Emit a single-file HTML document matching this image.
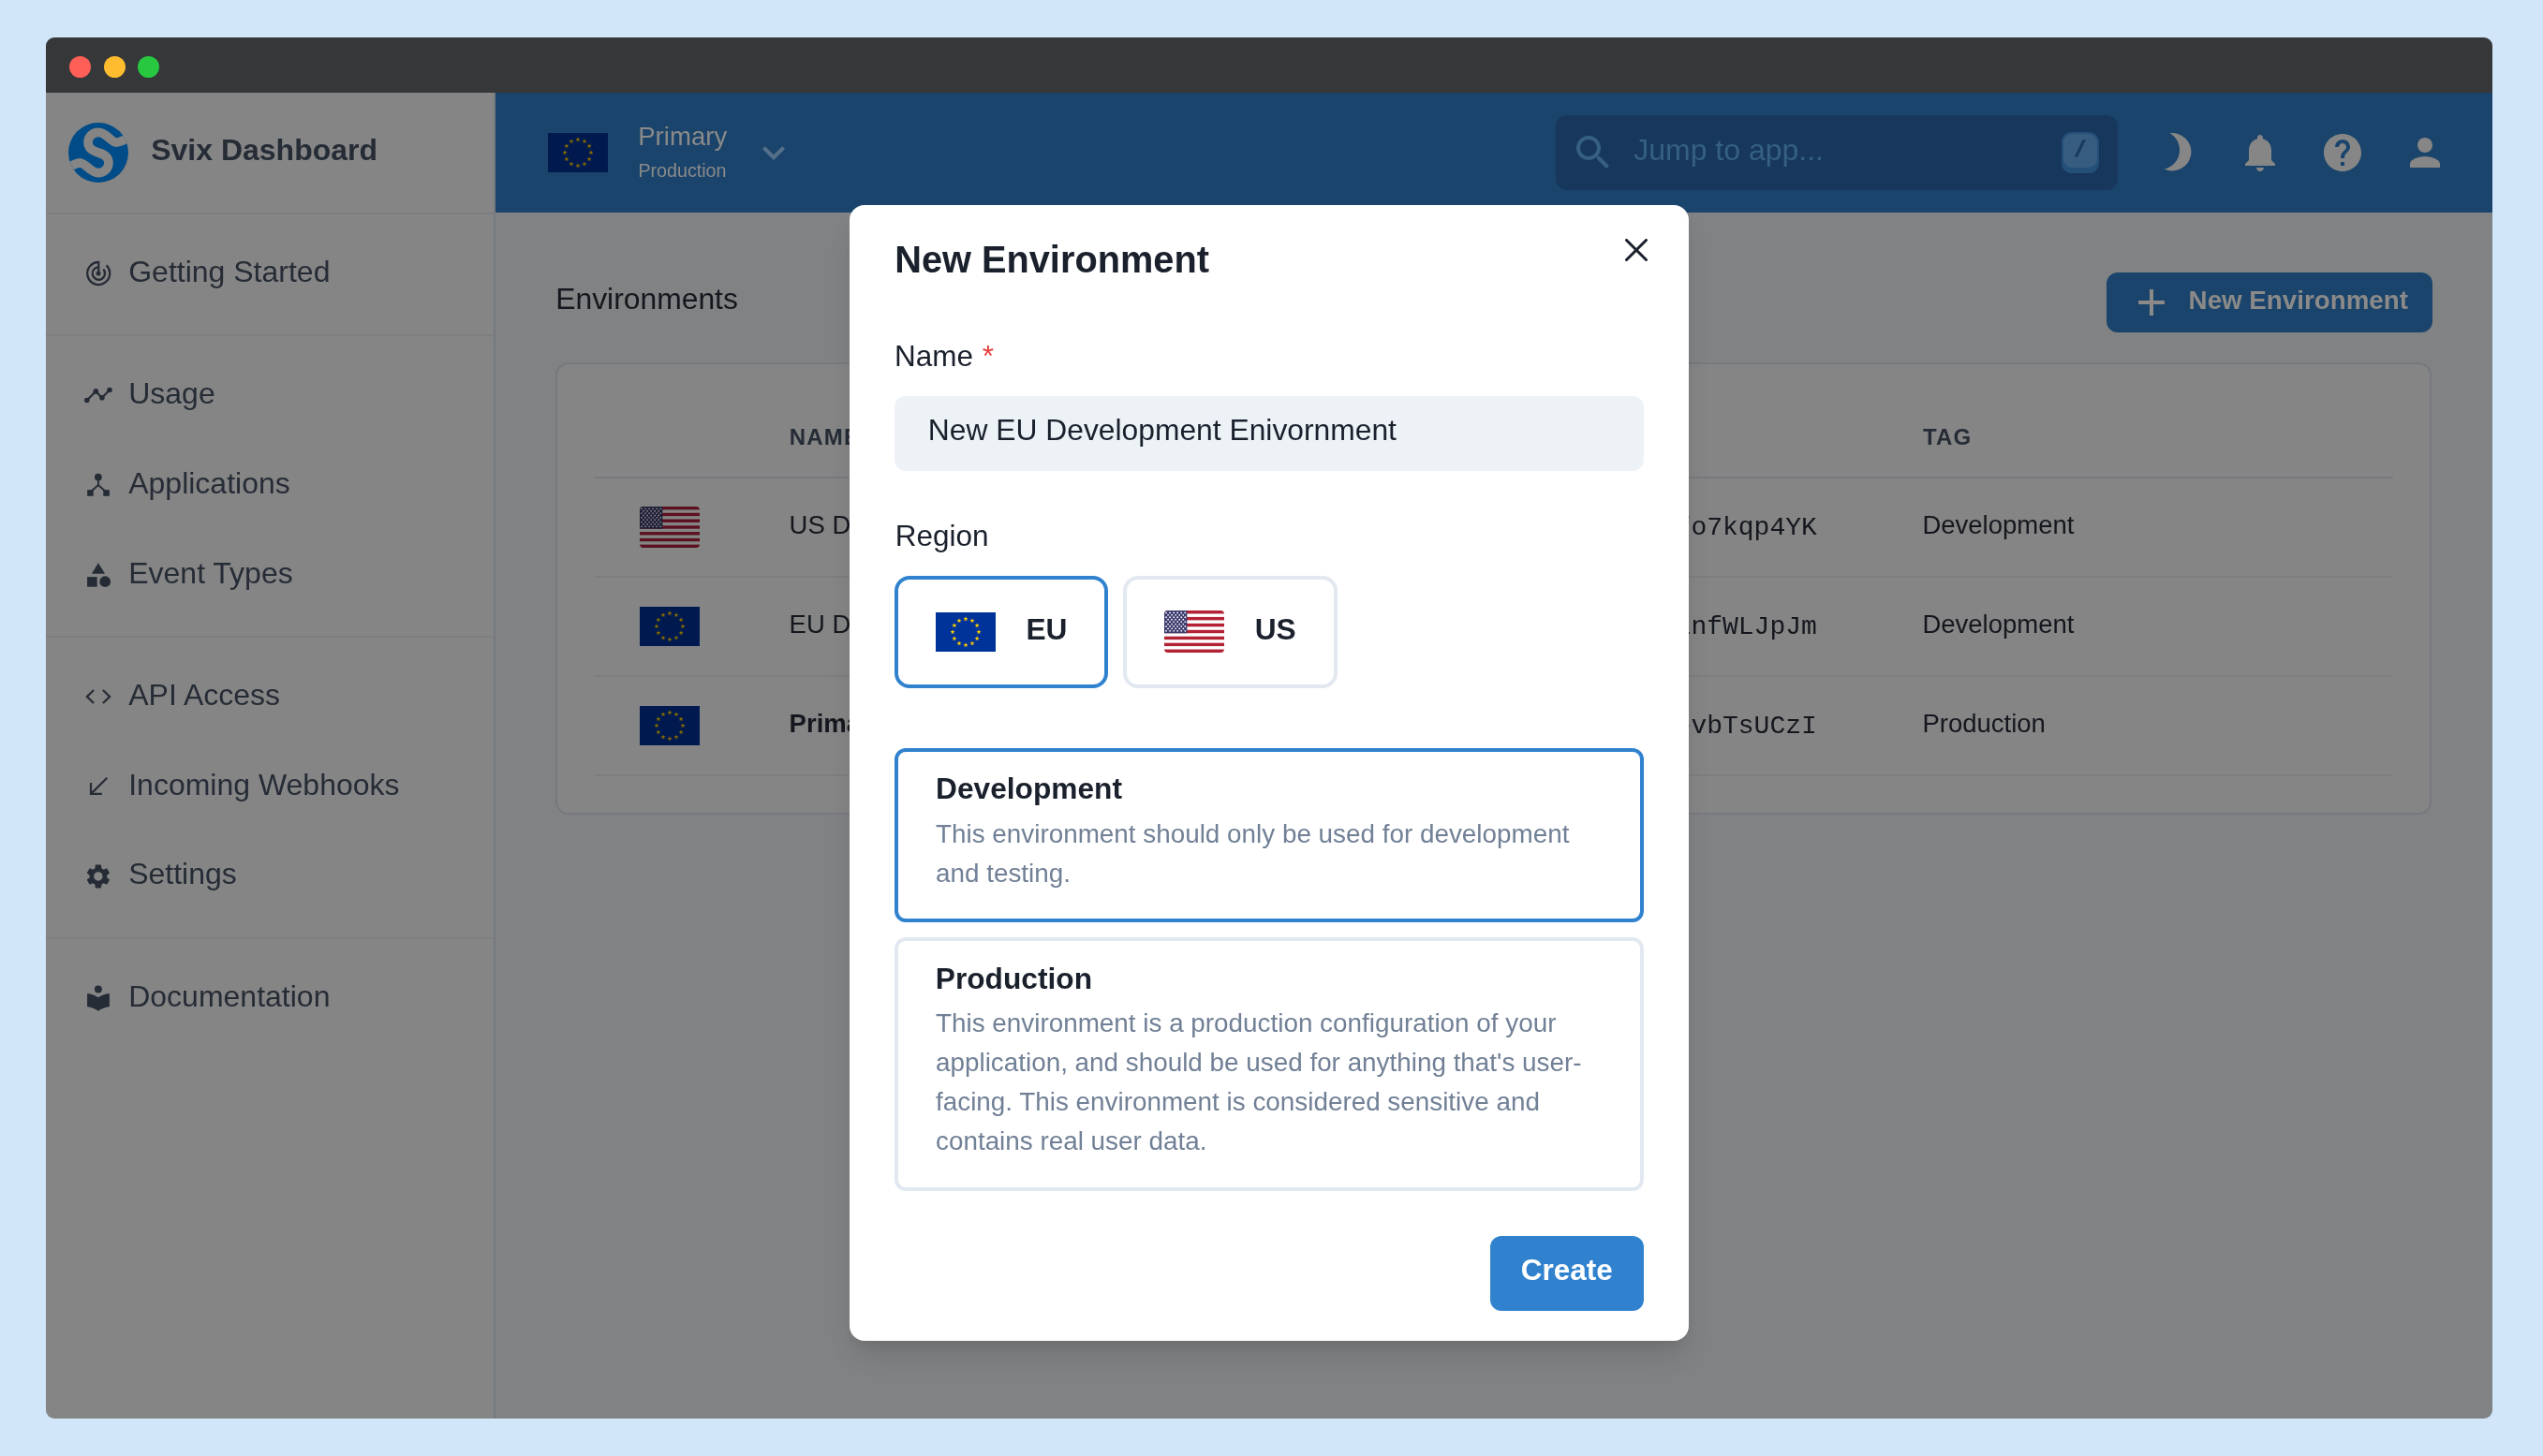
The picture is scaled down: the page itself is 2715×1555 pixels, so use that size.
<!DOCTYPE html>
<html><head><meta charset="utf-8"><title>Svix Dashboard</title>
<style>
html,body{margin:0;padding:0}
body{width:2715px;height:1555px;background:#d1e6f9;position:relative;overflow:hidden;font-family:"Liberation Sans",sans-serif}
.a{position:absolute}
.t{position:absolute;white-space:nowrap}
svg{display:block}
</style></head><body>
<div id="root" style="position:absolute;left:0;top:0;width:2715px;height:1555px;will-change:transform">
<div class="a" style="left:49px;top:40px;width:2612px;height:59px;background:#363739;border-radius:9px 9px 0 0"></div>
<div class="a" style="left:74.0px;top:59.6px;width:23px;height:23px;border-radius:50%;background:#ff5f57"></div>
<div class="a" style="left:110.8px;top:59.6px;width:23px;height:23px;border-radius:50%;background:#febc2e"></div>
<div class="a" style="left:147.3px;top:59.6px;width:23px;height:23px;border-radius:50%;background:#28c840"></div>
<div class="a" style="left:49px;top:99px;width:479px;height:1416px;background:#858585;border-radius:0 0 0 9px"></div>
<div class="a" style="left:49px;top:227px;width:478px;height:2px;background:#76797d;opacity:.55"></div>
<div class="a" style="left:49px;top:357px;width:478px;height:2px;background:#76797d;opacity:.55"></div>
<div class="a" style="left:49px;top:679px;width:478px;height:2px;background:#76797d;opacity:.55"></div>
<div class="a" style="left:49px;top:1001px;width:478px;height:2px;background:#76797d;opacity:.55"></div>
<svg class="a" style="left:73px;top:131px" width="64" height="64" viewBox="0 0 64 64"><defs><clipPath id="lc"><circle cx="32" cy="32" r="32"/></clipPath></defs><circle cx="32" cy="32" r="32" fill="#004c88"/><g clip-path="url(#lc)"><path d="M 74 11 C 66 14, 58 21.1, 51.3 21.1 C 45 20.4, 40.5 10.4, 32 10.4 C 26 10.4, 21 15.2, 21 21.1 C 21 26.7, 25.5 30.2, 32 32 C 38.5 33.8, 43 37.3, 43 42.9 C 43 48.8, 38 53.6, 32 53.6 C 23.5 53.6, 19 43.6, 12.7 42.9 C 6 42.9, -2 50, -10 53" fill="none" stroke="#858585" stroke-width="9.6"/></g></svg>
<div class="t" style="left:161.2px;top:143.61px;font-size:32px;line-height:32px;color:#262c36;font-weight:700;">Svix Dashboard</div>
<div class="t" style="left:137.2px;top:273.81px;font-size:32px;line-height:32px;color:#262c36;">Getting Started</div>
<div class="t" style="left:137.2px;top:403.91px;font-size:32px;line-height:32px;color:#262c36;">Usage</div>
<div class="t" style="left:137.2px;top:500.11px;font-size:32px;line-height:32px;color:#262c36;">Applications</div>
<div class="t" style="left:137.2px;top:596.01px;font-size:32px;line-height:32px;color:#262c36;">Event Types</div>
<div class="t" style="left:137.2px;top:725.91px;font-size:32px;line-height:32px;color:#262c36;">API Access</div>
<div class="t" style="left:137.2px;top:821.71px;font-size:32px;line-height:32px;color:#262c36;">Incoming Webhooks</div>
<div class="t" style="left:137.2px;top:916.91px;font-size:32px;line-height:32px;color:#262c36;">Settings</div>
<div class="t" style="left:137.2px;top:1047.61px;font-size:32px;line-height:32px;color:#262c36;">Documentation</div>
<svg class="a" style="left:85px;top:270px" width="40" height="40" viewBox="0 0 40 40"><path d="M20.3 10 A12 12 0 1 0 28.6 13.4" fill="none" stroke="#262c36" stroke-width="2.3"/><path d="M20.3 15.3 A6.7 6.7 0 1 0 25.3 17.5" fill="none" stroke="#262c36" stroke-width="2.3"/><rect x="19.2" y="9" width="2.2" height="13" fill="#262c36"/><circle cx="20" cy="22" r="2.5" fill="#262c36"/></svg>
<svg class="a" style="left:85px;top:400px" width="40" height="40" viewBox="0 0 40 40"><polyline points="7.8,27.5 17.3,17.9 23.9,24.7 32,16.5" fill="none" stroke="#262c36" stroke-width="2.2"/><circle cx="7.8" cy="27.5" r="2.8" fill="#262c36"/><circle cx="17.3" cy="17.9" r="2.8" fill="#262c36"/><circle cx="23.9" cy="24.7" r="2.8" fill="#262c36"/><circle cx="32" cy="16.5" r="2.8" fill="#262c36"/></svg>
<svg class="a" style="left:85px;top:495px" width="40" height="40" viewBox="0 0 40 40"><circle cx="19.9" cy="14.6" r="3.9" fill="#262c36"/><rect x="19" y="14.6" width="1.9" height="9" fill="#262c36"/><polyline points="12,30 19.9,23 27.8,30" fill="none" stroke="#262c36" stroke-width="2"/><rect x="8.2" y="28.2" width="6.5" height="6.6" fill="#262c36"/><rect x="25.3" y="28.2" width="6.6" height="6.6" fill="#262c36"/></svg>
<svg class="a" style="left:85px;top:590px" width="40" height="40" viewBox="0 0 40 40"><polygon points="19.9,11.3 12.9,22.8 27.1,22.8" fill="#262c36"/><rect x="8.1" y="26.1" width="10.6" height="10.6" fill="#262c36"/><circle cx="27.2" cy="31.2" r="5.9" fill="#262c36"/></svg>
<svg class="a" style="left:85px;top:722px" width="40" height="40" viewBox="0 0 40 40"><polyline points="15.1,15 7.9,22 15.1,29" fill="none" stroke="#262c36" stroke-width="2.3"/><polyline points="24.9,15 32.1,22 24.9,29" fill="none" stroke="#262c36" stroke-width="2.3"/></svg>
<svg class="a" style="left:85px;top:818px" width="40" height="40" viewBox="0 0 40 40"><line x1="29.3" y1="12.8" x2="12.6" y2="29.4" stroke="#262c36" stroke-width="2.2"/><polyline points="12,18.1 12,29.8 23.8,29.8" fill="none" stroke="#262c36" stroke-width="2.2"/></svg>
<svg class="a" style="left:85px;top:914px" width="40" height="40" viewBox="0 0 40 40"><g transform="translate(19.9 22) scale(1.29) translate(-12 -12)"><path d="M19.14 12.94c.04-.3.06-.61.06-.94 0-.32-.02-.64-.07-.94l2.03-1.58c.18-.14.23-.41.12-.61l-1.92-3.32c-.12-.22-.37-.29-.59-.22l-2.39.96c-.5-.38-1.03-.7-1.62-.94l-.36-2.54c-.04-.24-.24-.41-.48-.41h-3.84c-.24 0-.43.17-.47.41l-.36 2.54c-.59.24-1.13.57-1.62.94l-2.39-.96c-.22-.08-.47 0-.59.22L2.74 8.870c-.12.21-.08.47.12.61l2.03 1.580c-.05.3-.09.63-.09.94s.02.64.07.94l-2.03 1.58c-.18.14-.23.41-.12.61l1.92 3.32c.12.22.37.29.59.22l2.39-.96c.5.38 1.03.7 1.62.94l.36 2.54c.05.24.24.41.48.41h3.84c.24 0 .44-.17.47-.41l.36-2.54c.59-.24 1.13-.56 1.62-.94l2.39.96c.22.08.47 0 .59-.22l1.92-3.32c.12-.22.07-.47-.12-.61l-2.01-1.58zM12 15.6c-1.98 0-3.6-1.62-3.6-3.6s1.62-3.6 3.6-3.6 3.6 1.62 3.6 3.6-1.62 3.6-3.6 3.6z" fill="#262c36"/></g></svg>
<svg class="a" style="left:85px;top:1044px" width="40" height="40" viewBox="0 0 40 40"><circle cx="19.9" cy="12.6" r="4" fill="#262c36"/><path d="M8.1 16.9 Q15 17.5 19.9 21.2 Q24.8 17.5 31.9 16.9 V30.9 Q25 31.8 19.9 35.7 Q14.8 31.8 8.1 30.9 Z" fill="#262c36"/></svg>
<div class="a" style="left:529px;top:99px;width:2132px;height:1416px;background:#808283;border-radius:0 0 9px 0"></div>
<div class="a" style="left:529px;top:99px;width:2132px;height:128px;background:#1a446b;"></div>
<div class="a" style="left:527px;top:99px;width:2px;height:1416px;background:#76797d;"></div>
<svg class="a" style="left:585px;top:142px" width="64" height="42" viewBox="0 0 64 42"><rect width="64" height="42" fill="#001a50" rx="0"/><polygon points="32.00,4.37 32.65,6.11 34.52,6.20 33.06,7.36 33.56,9.15 32.00,8.13 30.44,9.15 30.94,7.36 29.48,6.20 31.35,6.11" fill="#856a00"/><polygon points="38.99,6.24 39.65,7.99 41.51,8.07 40.05,9.23 40.55,11.03 38.99,10.00 37.44,11.03 37.94,9.23 36.48,8.07 38.34,7.99" fill="#856a00"/><polygon points="44.11,11.36 44.77,13.11 46.63,13.19 45.17,14.35 45.67,16.15 44.11,15.12 42.56,16.15 43.06,14.35 41.60,13.19 43.46,13.11" fill="#856a00"/><polygon points="45.99,18.35 46.64,20.10 48.50,20.18 47.04,21.34 47.54,23.14 45.99,22.11 44.43,23.14 44.93,21.34 43.47,20.18 45.33,20.10" fill="#856a00"/><polygon points="44.11,25.35 44.77,27.09 46.63,27.18 45.17,28.34 45.67,30.13 44.11,29.10 42.56,30.13 43.06,28.34 41.60,27.18 43.46,27.09" fill="#856a00"/><polygon points="38.99,30.47 39.65,32.21 41.51,32.29 40.05,33.46 40.55,35.25 38.99,34.22 37.44,35.25 37.94,33.46 36.48,32.29 38.34,32.21" fill="#856a00"/><polygon points="32.00,32.34 32.65,34.09 34.52,34.17 33.06,35.33 33.56,37.13 32.00,36.10 30.44,37.13 30.94,35.33 29.48,34.17 31.35,34.09" fill="#856a00"/><polygon points="25.01,30.47 25.66,32.21 27.52,32.29 26.06,33.46 26.56,35.25 25.01,34.22 23.45,35.25 23.95,33.46 22.49,32.29 24.35,32.21" fill="#856a00"/><polygon points="19.89,25.35 20.54,27.09 22.40,27.18 20.94,28.34 21.44,30.13 19.89,29.10 18.33,30.13 18.83,28.34 17.37,27.18 19.23,27.09" fill="#856a00"/><polygon points="18.01,18.35 18.67,20.10 20.53,20.18 19.07,21.34 19.57,23.14 18.01,22.11 16.46,23.14 16.96,21.34 15.50,20.18 17.36,20.10" fill="#856a00"/><polygon points="19.89,11.36 20.54,13.11 22.40,13.19 20.94,14.35 21.44,16.15 19.89,15.12 18.33,16.15 18.83,14.35 17.37,13.19 19.23,13.11" fill="#856a00"/><polygon points="25.01,6.24 25.66,7.99 27.52,8.07 26.06,9.23 26.56,11.03 25.01,10.00 23.45,11.03 23.95,9.23 22.49,8.07 24.35,7.99" fill="#856a00"/></svg>
<div class="t" style="left:681.2px;top:131.83px;font-size:27.6px;line-height:27.6px;color:#8a8a8a;">Primary</div>
<div class="t" style="left:681.4px;top:172.92px;font-size:19.7px;line-height:19.7px;color:#8a8a8a;">Production</div>
<svg class="a" style="left:802px;top:139px" width="48" height="48" viewBox="0 0 24 24"><path d="M16.59 8.59L12 13.17 7.41 8.59 6 10l6 6 6-6z" fill="#56708a"/></svg>
<div class="a" style="left:1661px;top:123px;width:600px;height:80px;background:#17385c;border-radius:12px"></div>
<svg class="a" style="left:1677px;top:139px" width="48" height="48" viewBox="0 0 24 24"><path d="M15.5 14h-.79l-.28-.27C15.41 12.59 16 11.11 16 9.5 16 5.91 13.09 3 9.5 3S3 5.91 3 9.5 5.91 16 9.5 16c1.61 0 3.090-.59 4.23-1.57l.27.28v.79l5 4.99L20.49 19l-4.99-5zm-6 0C7.010 14 5 11.99 5 9.5S7.01 5 9.5 5 14 7.01 14 9.5 11.99 14 9.5 14z" fill="#35607f"/></svg>
<div class="t" style="left:1744.2px;top:143.91px;font-size:32px;line-height:32px;color:#35607f;">Jump to app...</div>
<div class="a" style="left:2201px;top:141px;width:40px;height:44px;background:#234f78;border-radius:11px"></div>
<div class="a" style="left:2203px;top:143px;width:36px;height:36px;background:#365d80;border-radius:9px"></div>
<svg class="a" style="left:2210px;top:145px" width="20" height="26" viewBox="0 0 20 26"><polygon points="4.5,22.8 8,22.8 17,4.2 13.5,4.2" fill="#183a5f"/></svg>
<svg class="a" style="left:2290px;top:135px" width="60" height="55" viewBox="2290 135 60 55"><path d="M2316.6 142.2 A20.2 20.2 0 1 1 2310.6 180.5 A20.76 20.76 0 0 0 2316.6 142.2 Z" fill="#868686"/></svg>
<svg class="a" style="left:2389px;top:139px" width="48" height="48" viewBox="0 0 24 24"><path d="M12 22c1.1 0 2-.9 2-2h-4c0 1.1.89 2 2 2zm6-6v-5c0-3.07-1.64-5.64-4.5-6.32V4c0-.83-.67-1.5-1.5-1.5s-1.5.67-1.5 1.5v.68C7.63 5.36 6 7.92 6 11v5l-2 2v1h16v-1l-2-2z" fill="#868686"/></svg>
<svg class="a" style="left:2477px;top:139px" width="48" height="48" viewBox="0 0 24 24"><path d="M12 2C6.48 2 2 6.48 2 12s4.48 10 10 10 10-4.48 10-10S17.52 2 12 2zm1 17h-2v-2h2v2zm2.07-7.75l-.9.92C13.45 12.9 13 13.5 13 15h-2v-.5c0-1.1.45-2.1 1.17-2.83l1.24-1.26c.37-.36.59-.86.59-1.41 0-1.1-.9-2-2-2s-2 .9-2 2H8c0-2.21 1.790-4 4-4s4 1.79 4 4c0 .88-.36 1.68-.93 2.25z" fill="#868686"/></svg>
<svg class="a" style="left:2565px;top:139px" width="48" height="48" viewBox="0 0 24 24"><path d="M12 12c2.21 0 4-1.79 4-4s-1.79-4-4-4-4 1.79-4 4 1.79 4 4 4zm0 2c-2.67 0-8 1.34-8 4v2h16v-2c0-2.66-5.33-4-8-4z" fill="#868686"/></svg>
<div class="t" style="left:593.2px;top:304.13px;font-size:31.85px;line-height:31.85px;color:#14171d;">Environments</div>
<div class="a" style="left:2249px;top:291px;width:348px;height:64px;background:#1a446b;border-radius:12px"></div>
<div class="a" style="left:2295px;top:309px;width:4px;height:28px;background:#8b8a89;"></div>
<div class="a" style="left:2283px;top:321px;width:28px;height:4px;background:#8b8a89;"></div>
<div class="t" style="left:2336.6px;top:306.80px;font-size:27.75px;line-height:27.75px;color:#8b8a89;font-weight:700;">New Environment</div>
<div class="a" style="left:593px;top:387px;width:2003px;height:483px;border:2px solid #76797d;border-radius:14px;background:#858585;box-sizing:border-box"></div>
<div class="t" style="left:842.8px;top:454.68px;font-size:24px;line-height:24px;color:#262c36;font-weight:700;letter-spacing:1.2px;">NAME</div>
<div class="t" style="left:2053.0px;top:454.68px;font-size:24px;line-height:24px;color:#262c36;font-weight:700;letter-spacing:1.2px;">TAG</div>
<div class="a" style="left:635px;top:509px;width:1920px;height:2px;background:#76797d;"></div>
<div class="a" style="left:635px;top:615px;width:1920px;height:2px;background:#7b7e81;"></div>
<div class="a" style="left:635px;top:721px;width:1920px;height:2px;background:#7b7e81;"></div>
<div class="a" style="left:635px;top:827px;width:1920px;height:2px;background:#7b7e81;"></div>
<svg class="a" style="left:683px;top:541px" width="64" height="44" viewBox="0 0 64 44"><defs><clipPath id="c683_541"><rect width="64" height="44" rx="4"/></clipPath></defs><g clip-path="url(#c683_541)"><rect width="64" height="44" fill="#858585"/><rect y="0.00" width="64" height="3.38" fill="#5c1120"/><rect y="6.77" width="64" height="3.38" fill="#5c1120"/><rect y="13.54" width="64" height="3.38" fill="#5c1120"/><rect y="20.31" width="64" height="3.38" fill="#5c1120"/><rect y="27.08" width="64" height="3.38" fill="#5c1120"/><rect y="33.85" width="64" height="3.38" fill="#5c1120"/><rect y="40.62" width="64" height="3.38" fill="#5c1120"/><rect width="24.32" height="23.69" fill="#1f1f39"/><circle cx="2.03" cy="2.37" r="0.9" fill="#858585"/><circle cx="6.08" cy="2.37" r="0.9" fill="#858585"/><circle cx="10.13" cy="2.37" r="0.9" fill="#858585"/><circle cx="14.19" cy="2.37" r="0.9" fill="#858585"/><circle cx="18.24" cy="2.37" r="0.9" fill="#858585"/><circle cx="22.29" cy="2.37" r="0.9" fill="#858585"/><circle cx="4.05" cy="4.74" r="0.9" fill="#858585"/><circle cx="8.11" cy="4.74" r="0.9" fill="#858585"/><circle cx="12.16" cy="4.74" r="0.9" fill="#858585"/><circle cx="16.21" cy="4.74" r="0.9" fill="#858585"/><circle cx="20.27" cy="4.74" r="0.9" fill="#858585"/><circle cx="2.03" cy="7.11" r="0.9" fill="#858585"/><circle cx="6.08" cy="7.11" r="0.9" fill="#858585"/><circle cx="10.13" cy="7.11" r="0.9" fill="#858585"/><circle cx="14.19" cy="7.11" r="0.9" fill="#858585"/><circle cx="18.24" cy="7.11" r="0.9" fill="#858585"/><circle cx="22.29" cy="7.11" r="0.9" fill="#858585"/><circle cx="4.05" cy="9.48" r="0.9" fill="#858585"/><circle cx="8.11" cy="9.48" r="0.9" fill="#858585"/><circle cx="12.16" cy="9.48" r="0.9" fill="#858585"/><circle cx="16.21" cy="9.48" r="0.9" fill="#858585"/><circle cx="20.27" cy="9.48" r="0.9" fill="#858585"/><circle cx="2.03" cy="11.85" r="0.9" fill="#858585"/><circle cx="6.08" cy="11.85" r="0.9" fill="#858585"/><circle cx="10.13" cy="11.85" r="0.9" fill="#858585"/><circle cx="14.19" cy="11.85" r="0.9" fill="#858585"/><circle cx="18.24" cy="11.85" r="0.9" fill="#858585"/><circle cx="22.29" cy="11.85" r="0.9" fill="#858585"/><circle cx="4.05" cy="14.22" r="0.9" fill="#858585"/><circle cx="8.11" cy="14.22" r="0.9" fill="#858585"/><circle cx="12.16" cy="14.22" r="0.9" fill="#858585"/><circle cx="16.21" cy="14.22" r="0.9" fill="#858585"/><circle cx="20.27" cy="14.22" r="0.9" fill="#858585"/><circle cx="2.03" cy="16.58" r="0.9" fill="#858585"/><circle cx="6.08" cy="16.58" r="0.9" fill="#858585"/><circle cx="10.13" cy="16.58" r="0.9" fill="#858585"/><circle cx="14.19" cy="16.58" r="0.9" fill="#858585"/><circle cx="18.24" cy="16.58" r="0.9" fill="#858585"/><circle cx="22.29" cy="16.58" r="0.9" fill="#858585"/><circle cx="4.05" cy="18.95" r="0.9" fill="#858585"/><circle cx="8.11" cy="18.95" r="0.9" fill="#858585"/><circle cx="12.16" cy="18.95" r="0.9" fill="#858585"/><circle cx="16.21" cy="18.95" r="0.9" fill="#858585"/><circle cx="20.27" cy="18.95" r="0.9" fill="#858585"/><circle cx="2.03" cy="21.32" r="0.9" fill="#858585"/><circle cx="6.08" cy="21.32" r="0.9" fill="#858585"/><circle cx="10.13" cy="21.32" r="0.9" fill="#858585"/><circle cx="14.19" cy="21.32" r="0.9" fill="#858585"/><circle cx="18.24" cy="21.32" r="0.9" fill="#858585"/><circle cx="22.29" cy="21.32" r="0.9" fill="#858585"/></g></svg>
<svg class="a" style="left:683px;top:648px" width="64" height="42" viewBox="0 0 64 42"><rect width="64" height="42" fill="#001a50" rx="0"/><polygon points="32.00,4.37 32.65,6.11 34.52,6.20 33.06,7.36 33.56,9.15 32.00,8.13 30.44,9.15 30.94,7.36 29.48,6.20 31.35,6.11" fill="#856a00"/><polygon points="38.99,6.24 39.65,7.99 41.51,8.07 40.05,9.23 40.55,11.03 38.99,10.00 37.44,11.03 37.94,9.23 36.48,8.07 38.34,7.99" fill="#856a00"/><polygon points="44.11,11.36 44.77,13.11 46.63,13.19 45.17,14.35 45.67,16.15 44.11,15.12 42.56,16.15 43.06,14.35 41.60,13.19 43.46,13.11" fill="#856a00"/><polygon points="45.99,18.35 46.64,20.10 48.50,20.18 47.04,21.34 47.54,23.14 45.99,22.11 44.43,23.14 44.93,21.34 43.47,20.18 45.33,20.10" fill="#856a00"/><polygon points="44.11,25.35 44.77,27.09 46.63,27.18 45.17,28.34 45.67,30.13 44.11,29.10 42.56,30.13 43.06,28.34 41.60,27.18 43.46,27.09" fill="#856a00"/><polygon points="38.99,30.47 39.65,32.21 41.51,32.29 40.05,33.46 40.55,35.25 38.99,34.22 37.44,35.25 37.94,33.46 36.48,32.29 38.34,32.21" fill="#856a00"/><polygon points="32.00,32.34 32.65,34.09 34.52,34.17 33.06,35.33 33.56,37.13 32.00,36.10 30.44,37.13 30.94,35.33 29.48,34.17 31.35,34.09" fill="#856a00"/><polygon points="25.01,30.47 25.66,32.21 27.52,32.29 26.06,33.46 26.56,35.25 25.01,34.22 23.45,35.25 23.95,33.46 22.49,32.29 24.35,32.21" fill="#856a00"/><polygon points="19.89,25.35 20.54,27.09 22.40,27.18 20.94,28.34 21.44,30.13 19.89,29.10 18.33,30.13 18.83,28.34 17.37,27.18 19.23,27.09" fill="#856a00"/><polygon points="18.01,18.35 18.67,20.10 20.53,20.18 19.07,21.34 19.57,23.14 18.01,22.11 16.46,23.14 16.96,21.34 15.50,20.18 17.36,20.10" fill="#856a00"/><polygon points="19.89,11.36 20.54,13.11 22.40,13.19 20.94,14.35 21.44,16.15 19.89,15.12 18.33,16.15 18.83,14.35 17.37,13.19 19.23,13.11" fill="#856a00"/><polygon points="25.01,6.24 25.66,7.99 27.52,8.07 26.06,9.23 26.56,11.03 25.01,10.00 23.45,11.03 23.95,9.23 22.49,8.07 24.35,7.99" fill="#856a00"/></svg>
<svg class="a" style="left:683px;top:754px" width="64" height="42" viewBox="0 0 64 42"><rect width="64" height="42" fill="#001a50" rx="0"/><polygon points="32.00,4.37 32.65,6.11 34.52,6.20 33.06,7.36 33.56,9.15 32.00,8.13 30.44,9.15 30.94,7.36 29.48,6.20 31.35,6.11" fill="#856a00"/><polygon points="38.99,6.24 39.65,7.99 41.51,8.07 40.05,9.23 40.55,11.03 38.99,10.00 37.44,11.03 37.94,9.23 36.48,8.07 38.34,7.99" fill="#856a00"/><polygon points="44.11,11.36 44.77,13.11 46.63,13.19 45.17,14.35 45.67,16.15 44.11,15.12 42.56,16.15 43.06,14.35 41.60,13.19 43.46,13.11" fill="#856a00"/><polygon points="45.99,18.35 46.64,20.10 48.50,20.18 47.04,21.34 47.54,23.14 45.99,22.11 44.43,23.14 44.93,21.34 43.47,20.18 45.33,20.10" fill="#856a00"/><polygon points="44.11,25.35 44.77,27.09 46.63,27.18 45.17,28.34 45.67,30.13 44.11,29.10 42.56,30.13 43.06,28.34 41.60,27.18 43.46,27.09" fill="#856a00"/><polygon points="38.99,30.47 39.65,32.21 41.51,32.29 40.05,33.46 40.55,35.25 38.99,34.22 37.44,35.25 37.94,33.46 36.48,32.29 38.34,32.21" fill="#856a00"/><polygon points="32.00,32.34 32.65,34.09 34.52,34.17 33.06,35.33 33.56,37.13 32.00,36.10 30.44,37.13 30.94,35.33 29.48,34.17 31.35,34.09" fill="#856a00"/><polygon points="25.01,30.47 25.66,32.21 27.52,32.29 26.06,33.46 26.56,35.25 25.01,34.22 23.45,35.25 23.95,33.46 22.49,32.29 24.35,32.21" fill="#856a00"/><polygon points="19.89,25.35 20.54,27.09 22.40,27.18 20.94,28.34 21.44,30.13 19.89,29.10 18.33,30.13 18.83,28.34 17.37,27.18 19.23,27.09" fill="#856a00"/><polygon points="18.01,18.35 18.67,20.10 20.53,20.18 19.07,21.34 19.57,23.14 18.01,22.11 16.46,23.14 16.96,21.34 15.50,20.18 17.36,20.10" fill="#856a00"/><polygon points="19.89,11.36 20.54,13.11 22.40,13.19 20.94,14.35 21.44,16.15 19.89,15.12 18.33,16.15 18.83,14.35 17.37,13.19 19.23,13.11" fill="#856a00"/><polygon points="25.01,6.24 25.66,7.99 27.52,8.07 26.06,9.23 26.56,11.03 25.01,10.00 23.45,11.03 23.95,9.23 22.49,8.07 24.35,7.99" fill="#856a00"/></svg>
<div class="t" style="left:842.6px;top:546.72px;font-size:27.5px;line-height:27.5px;color:#14171d;">US Development</div>
<div class="t" style="right:775.2px;top:549.55px;font-size:28px;line-height:28px;color:#14171d;font-family:'Liberation Mono',monospace;">qfo7kqp4YK</div>
<div class="t" style="left:2052.4px;top:546.72px;font-size:27.5px;line-height:27.5px;color:#14171d;">Development</div>
<div class="t" style="left:842.6px;top:652.72px;font-size:27.5px;line-height:27.5px;color:#14171d;">EU Development</div>
<div class="t" style="right:775.2px;top:655.55px;font-size:28px;line-height:28px;color:#14171d;font-family:'Liberation Mono',monospace;">xinfWLJpJm</div>
<div class="t" style="left:2052.4px;top:652.72px;font-size:27.5px;line-height:27.5px;color:#14171d;">Development</div>
<div class="t" style="left:842.6px;top:758.72px;font-size:27.5px;line-height:27.5px;color:#14171d;font-weight:700;">Primary</div>
<div class="t" style="right:775.2px;top:761.55px;font-size:28px;line-height:28px;color:#14171d;font-family:'Liberation Mono',monospace;">zevbTsUCzI</div>
<div class="t" style="left:2052.4px;top:758.72px;font-size:27.5px;line-height:27.5px;color:#14171d;">Production</div>
<div class="a" style="left:907px;top:219px;width:896px;height:1213px;background:#ffffff;border-radius:16px;box-shadow:0 20px 30px -6px rgba(0,0,0,.12),0 8px 12px -4px rgba(0,0,0,.06)"></div>
<div class="t" style="left:955.2px;top:257.84px;font-size:39.75px;line-height:39.75px;color:#1a202c;font-weight:700;">New Environment</div>
<svg class="a" style="left:1735px;top:255px" width="24" height="24" viewBox="0 0 24 24"><path d="M.439,21.44a1.5,1.5,0,0,0,2.122,2.121L11.823,14.3a.25.25,0,0,1,.354,0l9.262,9.263a1.5,1.5,0,1,0,2.122-2.121L14.3,12.177a.25.25,0,0,1,0-.354l9.263-9.262A1.5,1.5,0,0,0,21.439.44L12.177,9.7a.25.25,0,0,1-.354,0L2.561.44A1.5,1.5,0,0,0,.439,2.561L9.7,11.823a.25.25,0,0,1,0,.354Z" fill="#1a202c"/></svg>
<div class="t" style="left:955.0px;top:364.63px;font-size:31.5px;line-height:31.5px;color:#1a202c;">Name</div>
<div class="t" style="left:1048.8px;top:364.63px;font-size:31.5px;line-height:31.5px;color:#e53e3e;">*</div>
<div class="a" style="left:955px;top:423px;width:800px;height:80px;background:#edf2f7;border-radius:12px"></div>
<div class="t" style="left:990.8px;top:443.87px;font-size:31.8px;line-height:31.8px;color:#1a202c;">New EU Development Enivornment</div>
<div class="t" style="left:955.8px;top:556.63px;font-size:31.5px;line-height:31.5px;color:#1a202c;">Region</div>
<div class="a" style="left:955px;top:615px;width:228px;height:120px;border:4px solid #3182ce;border-radius:16px;box-sizing:border-box"></div>
<div class="a" style="left:1199px;top:615px;width:229px;height:120px;border:4px solid #e2e8f0;border-radius:16px;box-sizing:border-box"></div>
<svg class="a" style="left:999px;top:654px" width="64" height="42" viewBox="0 0 64 42"><rect width="64" height="42" fill="#003399" rx="0"/><polygon points="32.00,4.37 32.65,6.11 34.52,6.20 33.06,7.36 33.56,9.15 32.00,8.13 30.44,9.15 30.94,7.36 29.48,6.20 31.35,6.11" fill="#ffcc00"/><polygon points="38.99,6.24 39.65,7.99 41.51,8.07 40.05,9.23 40.55,11.03 38.99,10.00 37.44,11.03 37.94,9.23 36.48,8.07 38.34,7.99" fill="#ffcc00"/><polygon points="44.11,11.36 44.77,13.11 46.63,13.19 45.17,14.35 45.67,16.15 44.11,15.12 42.56,16.15 43.06,14.35 41.60,13.19 43.46,13.11" fill="#ffcc00"/><polygon points="45.99,18.35 46.64,20.10 48.50,20.18 47.04,21.34 47.54,23.14 45.99,22.11 44.43,23.14 44.93,21.34 43.47,20.18 45.33,20.10" fill="#ffcc00"/><polygon points="44.11,25.35 44.77,27.09 46.63,27.18 45.17,28.34 45.67,30.13 44.11,29.10 42.56,30.13 43.06,28.34 41.60,27.18 43.46,27.09" fill="#ffcc00"/><polygon points="38.99,30.47 39.65,32.21 41.51,32.29 40.05,33.46 40.55,35.25 38.99,34.22 37.44,35.25 37.94,33.46 36.48,32.29 38.34,32.21" fill="#ffcc00"/><polygon points="32.00,32.34 32.65,34.09 34.52,34.17 33.06,35.33 33.56,37.13 32.00,36.10 30.44,37.13 30.94,35.33 29.48,34.17 31.35,34.09" fill="#ffcc00"/><polygon points="25.01,30.47 25.66,32.21 27.52,32.29 26.06,33.46 26.56,35.25 25.01,34.22 23.45,35.25 23.95,33.46 22.49,32.29 24.35,32.21" fill="#ffcc00"/><polygon points="19.89,25.35 20.54,27.09 22.40,27.18 20.94,28.34 21.44,30.13 19.89,29.10 18.33,30.13 18.83,28.34 17.37,27.18 19.23,27.09" fill="#ffcc00"/><polygon points="18.01,18.35 18.67,20.10 20.53,20.18 19.07,21.34 19.57,23.14 18.01,22.11 16.46,23.14 16.96,21.34 15.50,20.18 17.36,20.10" fill="#ffcc00"/><polygon points="19.89,11.36 20.54,13.11 22.40,13.19 20.94,14.35 21.44,16.15 19.89,15.12 18.33,16.15 18.83,14.35 17.37,13.19 19.23,13.11" fill="#ffcc00"/><polygon points="25.01,6.24 25.66,7.99 27.52,8.07 26.06,9.23 26.56,11.03 25.01,10.00 23.45,11.03 23.95,9.23 22.49,8.07 24.35,7.99" fill="#ffcc00"/></svg>
<svg class="a" style="left:1243px;top:652px" width="64" height="45" viewBox="0 0 64 45"><defs><clipPath id="c1243_652"><rect width="64" height="45" rx="4"/></clipPath></defs><g clip-path="url(#c1243_652)"><rect width="64" height="45" fill="#ffffff"/><rect y="0.00" width="64" height="3.46" fill="#b22234"/><rect y="6.92" width="64" height="3.46" fill="#b22234"/><rect y="13.85" width="64" height="3.46" fill="#b22234"/><rect y="20.77" width="64" height="3.46" fill="#b22234"/><rect y="27.69" width="64" height="3.46" fill="#b22234"/><rect y="34.62" width="64" height="3.46" fill="#b22234"/><rect y="41.54" width="64" height="3.46" fill="#b22234"/><rect width="24.32" height="24.23" fill="#3c3b6e"/><circle cx="2.03" cy="2.42" r="0.9" fill="#ffffff"/><circle cx="6.08" cy="2.42" r="0.9" fill="#ffffff"/><circle cx="10.13" cy="2.42" r="0.9" fill="#ffffff"/><circle cx="14.19" cy="2.42" r="0.9" fill="#ffffff"/><circle cx="18.24" cy="2.42" r="0.9" fill="#ffffff"/><circle cx="22.29" cy="2.42" r="0.9" fill="#ffffff"/><circle cx="4.05" cy="4.85" r="0.9" fill="#ffffff"/><circle cx="8.11" cy="4.85" r="0.9" fill="#ffffff"/><circle cx="12.16" cy="4.85" r="0.9" fill="#ffffff"/><circle cx="16.21" cy="4.85" r="0.9" fill="#ffffff"/><circle cx="20.27" cy="4.85" r="0.9" fill="#ffffff"/><circle cx="2.03" cy="7.27" r="0.9" fill="#ffffff"/><circle cx="6.08" cy="7.27" r="0.9" fill="#ffffff"/><circle cx="10.13" cy="7.27" r="0.9" fill="#ffffff"/><circle cx="14.19" cy="7.27" r="0.9" fill="#ffffff"/><circle cx="18.24" cy="7.27" r="0.9" fill="#ffffff"/><circle cx="22.29" cy="7.27" r="0.9" fill="#ffffff"/><circle cx="4.05" cy="9.69" r="0.9" fill="#ffffff"/><circle cx="8.11" cy="9.69" r="0.9" fill="#ffffff"/><circle cx="12.16" cy="9.69" r="0.9" fill="#ffffff"/><circle cx="16.21" cy="9.69" r="0.9" fill="#ffffff"/><circle cx="20.27" cy="9.69" r="0.9" fill="#ffffff"/><circle cx="2.03" cy="12.12" r="0.9" fill="#ffffff"/><circle cx="6.08" cy="12.12" r="0.9" fill="#ffffff"/><circle cx="10.13" cy="12.12" r="0.9" fill="#ffffff"/><circle cx="14.19" cy="12.12" r="0.9" fill="#ffffff"/><circle cx="18.24" cy="12.12" r="0.9" fill="#ffffff"/><circle cx="22.29" cy="12.12" r="0.9" fill="#ffffff"/><circle cx="4.05" cy="14.54" r="0.9" fill="#ffffff"/><circle cx="8.11" cy="14.54" r="0.9" fill="#ffffff"/><circle cx="12.16" cy="14.54" r="0.9" fill="#ffffff"/><circle cx="16.21" cy="14.54" r="0.9" fill="#ffffff"/><circle cx="20.27" cy="14.54" r="0.9" fill="#ffffff"/><circle cx="2.03" cy="16.96" r="0.9" fill="#ffffff"/><circle cx="6.08" cy="16.96" r="0.9" fill="#ffffff"/><circle cx="10.13" cy="16.96" r="0.9" fill="#ffffff"/><circle cx="14.19" cy="16.96" r="0.9" fill="#ffffff"/><circle cx="18.24" cy="16.96" r="0.9" fill="#ffffff"/><circle cx="22.29" cy="16.96" r="0.9" fill="#ffffff"/><circle cx="4.05" cy="19.38" r="0.9" fill="#ffffff"/><circle cx="8.11" cy="19.38" r="0.9" fill="#ffffff"/><circle cx="12.16" cy="19.38" r="0.9" fill="#ffffff"/><circle cx="16.21" cy="19.38" r="0.9" fill="#ffffff"/><circle cx="20.27" cy="19.38" r="0.9" fill="#ffffff"/><circle cx="2.03" cy="21.81" r="0.9" fill="#ffffff"/><circle cx="6.08" cy="21.81" r="0.9" fill="#ffffff"/><circle cx="10.13" cy="21.81" r="0.9" fill="#ffffff"/><circle cx="14.19" cy="21.81" r="0.9" fill="#ffffff"/><circle cx="18.24" cy="21.81" r="0.9" fill="#ffffff"/><circle cx="22.29" cy="21.81" r="0.9" fill="#ffffff"/></g></svg>
<div class="t" style="left:1095.4px;top:656.76px;font-size:31.7px;line-height:31.7px;color:#1a202c;font-weight:700;">EU</div>
<div class="t" style="left:1339.7px;top:656.76px;font-size:31.7px;line-height:31.7px;color:#1a202c;font-weight:700;">US</div>
<div class="a" style="left:955px;top:799px;width:800px;height:186px;border:4px solid #3182ce;border-radius:12px;box-sizing:border-box"></div>
<div class="t" style="left:999.0px;top:827.46px;font-size:31.7px;line-height:31.7px;color:#1a202c;font-weight:700;">Development</div>
<div class="t" style="left:999.0px;top:877.42px;font-size:27.85px;line-height:27.85px;color:#718096;">This environment should only be used for development</div>
<div class="t" style="left:999.0px;top:919.42px;font-size:27.85px;line-height:27.85px;color:#718096;">and testing.</div>
<div class="a" style="left:955px;top:1001px;width:800px;height:271px;border:4px solid #e2e8f0;border-radius:12px;box-sizing:border-box"></div>
<div class="t" style="left:998.8px;top:1029.96px;font-size:31.7px;line-height:31.7px;color:#1a202c;font-weight:700;">Production</div>
<div class="t" style="left:999.0px;top:1079.32px;font-size:27.85px;line-height:27.85px;color:#718096;">This environment is a production configuration of your</div>
<div class="t" style="left:999.0px;top:1121.12px;font-size:27.85px;line-height:27.85px;color:#718096;">application, and should be used for anything that's user-</div>
<div class="t" style="left:999.0px;top:1163.12px;font-size:27.85px;line-height:27.85px;color:#718096;">facing. This environment is considered sensitive and</div>
<div class="t" style="left:999.0px;top:1205.32px;font-size:27.85px;line-height:27.85px;color:#718096;">contains real user data.</div>
<div class="a" style="left:1591px;top:1320px;width:164px;height:80px;background:#3182ce;border-radius:12px"></div>
<div class="t" style="left:1623.8px;top:1340.73px;font-size:31.5px;line-height:31.5px;color:#ffffff;font-weight:700;">Create</div>
</div>
</body></html>
